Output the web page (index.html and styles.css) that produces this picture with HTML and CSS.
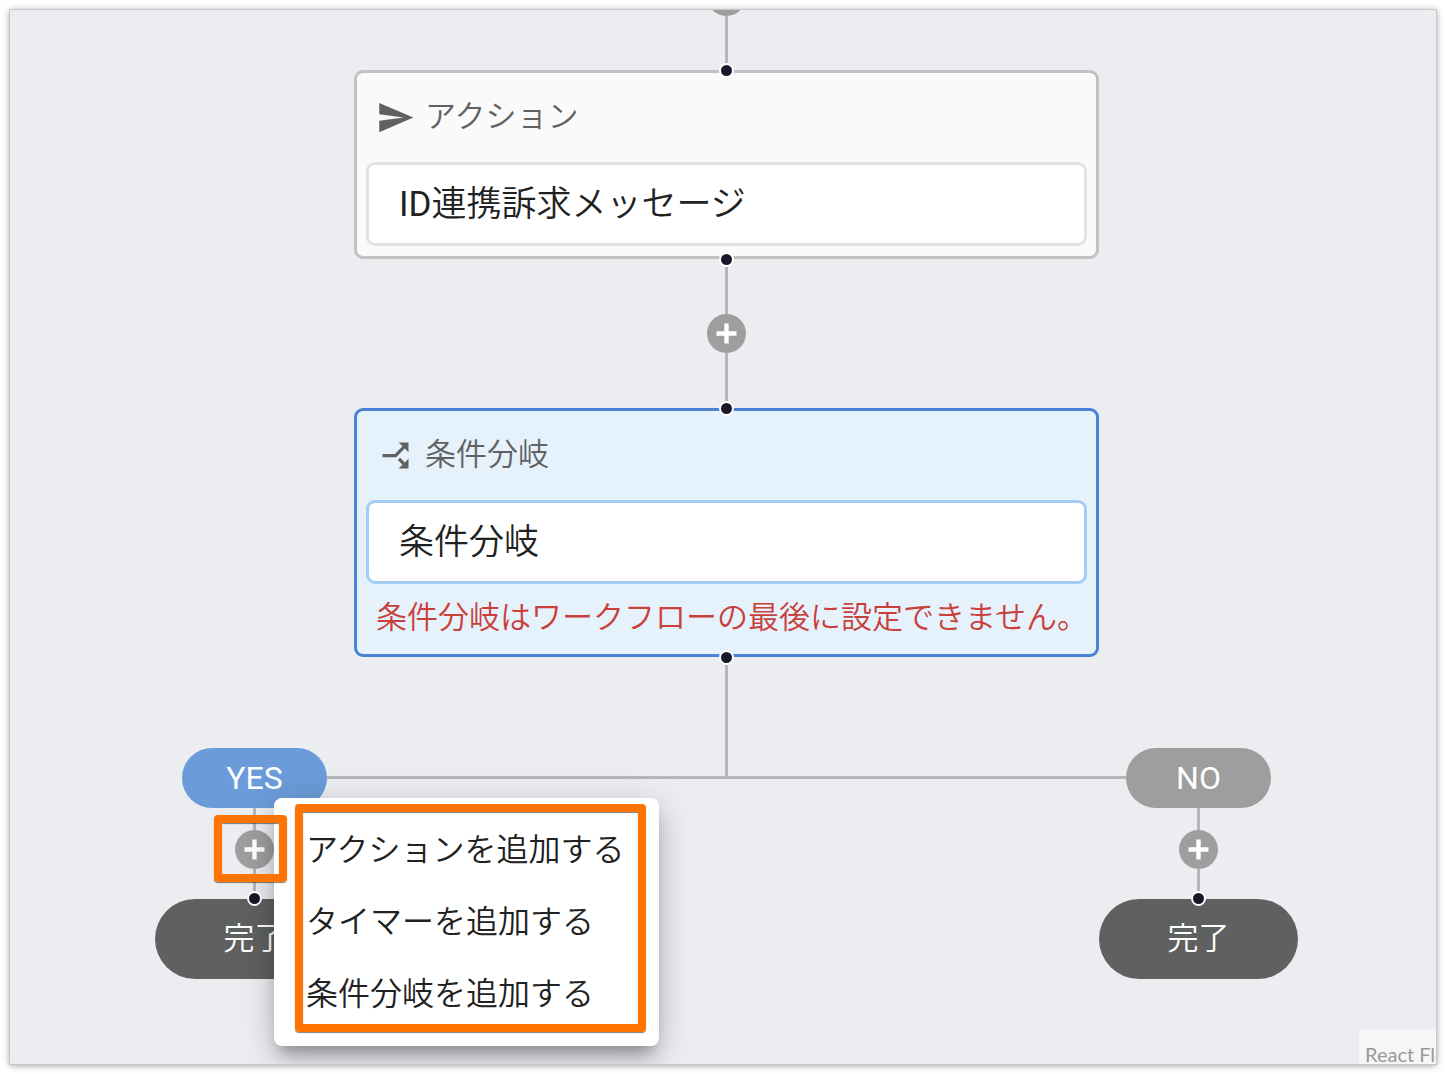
FILE: index.html
```html
<!DOCTYPE html>
<html lang="ja">
<head>
<meta charset="utf-8">
<meta name="viewport" content="width=device-width, initial-scale=1">
<title>ワークフロー</title>
<link rel="stylesheet" href="styles.css">
</head>
<body>
<main class="canvas">
  <div class="flow">
    <button class="add add-first" type="button" aria-label="追加">
      <svg class="plus" viewBox="0 0 21 21"><path d="M8.3 .5h4.4v7.8h7.8v4.4h-7.8v7.8H8.3v-7.8H.5V8.3h7.8z"/></svg>
    </button>
    <span class="line line-entry"></span>

    <section class="node">
      <span class="handle handle-top"></span>
      <label class="node-head" for="action-name">
        <svg class="icon" viewBox="0 0 24 24"><path d="M2.01 21L23 12 2.01 3 2 10l15 2-15 2z"/></svg>
        <span class="node-type">アクション</span>
      </label>
      <input class="node-name" id="action-name" type="text" value="ID連携訴求メッセージ" readonly>
      <span class="handle handle-bottom"></span>
    </section>

    <span class="line line-half"></span>
    <button class="add" type="button" aria-label="追加">
      <svg class="plus" viewBox="0 0 21 21"><path d="M8.3 .5h4.4v7.8h7.8v4.4h-7.8v7.8H8.3v-7.8H.5V8.3h7.8z"/></svg>
    </button>
    <span class="line line-half"></span>

    <section class="node node-selected">
      <span class="handle handle-top"></span>
      <label class="node-head" for="branch-name">
        <svg class="icon" viewBox="0 0 24 24"><path transform="rotate(90 12 12)" d="M14 4l2.29 2.29-2.88 2.88 1.42 1.42 2.88-2.88L20 10V4zm-4 0H4v6l2.29-2.29 4.71 4.7V20h2v-8.41l-5.29-5.3z"/></svg>
        <span class="node-type">条件分岐</span>
      </label>
      <input class="node-name" id="branch-name" type="text" value="条件分岐" readonly>
      <p class="node-error">条件分岐はワークフローの最後に設定できません。</p>
      <span class="handle handle-bottom"></span>
    </section>

    <span class="line line-fork"></span>

    <div class="branches">
      <div class="branch">
        <span class="pill pill-yes">YES</span>
        <span class="line line-short"></span>
        <button class="add" type="button" aria-label="追加" aria-expanded="true">
          <svg class="plus" viewBox="0 0 21 21"><path d="M8.3 .5h4.4v7.8h7.8v4.4h-7.8v7.8H8.3v-7.8H.5V8.3h7.8z"/></svg>
        </button>
        <span class="line line-end"></span>
        <div class="done"><span class="handle handle-done"></span>完了</div>

        <div class="menu">
          <button class="menu-item" type="button">アクションを追加する</button>
          <button class="menu-item" type="button">タイマーを追加する</button>
          <button class="menu-item" type="button">条件分岐を追加する</button>
          <span class="mark mark-menu"></span>
        </div>
        <span class="mark mark-add"></span>
      </div>

      <div class="fork"><span class="line"></span></div>

      <div class="branch">
        <span class="pill">NO</span>
        <span class="line line-short"></span>
        <button class="add" type="button" aria-label="追加">
          <svg class="plus" viewBox="0 0 21 21"><path d="M8.3 .5h4.4v7.8h7.8v4.4h-7.8v7.8H8.3v-7.8H.5V8.3h7.8z"/></svg>
        </button>
        <span class="line line-end"></span>
        <div class="done"><span class="handle handle-done"></span>完了</div>
      </div>
    </div>
  </div>
  <a class="attribution" href="#">React Flow</a>
</main>
</body>
</html>
```
FILE: styles.css
```css
* {
  box-sizing: border-box;
}

body {
  margin: 0;
  padding: 10px;
  background: #fff;
  color: #212121;
  font-family: Roboto, "Noto Sans CJK JP", sans-serif;
  font-weight: 350;
}

button,
input {
  font: inherit;
  color: inherit;
}

.canvas {
  position: relative;
  display: flex;
  justify-content: center;
  min-height: calc(100vh - 20px);
  padding-left: 7px;
  overflow: hidden;
  background: #ecedf1;
  outline: 1px solid #c8c8c8;
  box-shadow: 0 1px 7px rgba(0, 0, 0, 0.45);
}

.flow {
  display: flex;
  flex-direction: column;
  align-items: center;
  width: 1145px;
}

/* connectors */
.line {
  flex: none;
  width: 3px;
  background: #b5b5ba;
}

.line-entry { height: 54px; }
.line-half { height: 55px; }
.line-fork { height: 91px; }
.line-short { height: 22px; }
.line-end { height: 30px; }

.add {
  display: flex;
  flex: none;
  align-items: center;
  justify-content: center;
  width: 39px;
  height: 39px;
  padding: 0;
  border: 0;
  border-radius: 50%;
  background: #9e9e9e;
}

.add-first {
  margin-top: -33px;
}

.plus {
  width: 21px;
  height: 21px;
  fill: #fff;
}

.handle {
  position: absolute;
  right: 0;
  left: 0;
  width: 15px;
  height: 15px;
  margin: 0 auto;
  border: 2px solid #fff;
  border-radius: 50%;
  background: #1a192b;
}

.handle-top { top: -10px; }
.handle-bottom { bottom: -11px; }
.handle-done { top: -8px; }

/* nodes */
.node {
  position: relative;
  display: flex;
  flex-direction: column;
  width: 745px;
  padding: 0 9px 10px;
  border: 3px solid #c2c2c2;
  border-radius: 9px;
  background: #fafafa;
}

.node-head {
  display: flex;
  align-items: center;
  gap: 10px;
  height: 89px;
  padding-left: 10px;
  color: #616161;
  font-size: 31px;
}

.node-type {
  padding-bottom: 8px;
}

.icon {
  width: 39px;
  height: 39px;
  fill: currentColor;
}

.node-name {
  width: 100%;
  height: 84px;
  padding: 0 30px 8px;
  border: 3px solid #e2e2e2;
  border-radius: 9px;
  outline: 0;
  background: #fff;
  font-family: Roboto, "Noto Sans CJK JP DemiLight", "Noto Sans CJK JP", sans-serif;
  font-size: 35px;
  font-weight: 400;
}

.node-error {
  margin: 0;
  padding: 14px 10px 6px;
  color: #c9403a;
  font-size: 31px;
  line-height: 40px;
  white-space: nowrap;
}

.node-selected {
  border-color: #4a82d4;
  background: #e5f1fb;
}

.node-selected .node-name {
  border-color: #a4ccf4;
}

/* branches */
.branches {
  display: flex;
  align-self: stretch;
}

.branch {
  position: relative;
  display: flex;
  flex-direction: column;
  align-items: center;
  width: 201px;
}

.fork {
  display: flex;
  flex: 1;
  justify-content: center;
  height: 31px;
  margin: 0 -28px;
  border-bottom: 3px solid #b5b5ba;
}

.pill {
  width: 145px;
  border-radius: 30px;
  background: #9e9e9e;
  color: #fff;
  font-size: 32px;
  font-weight: 400;
  line-height: 60px;
  text-align: center;
}

.pill-yes {
  background: #6b9cd9;
}

.done {
  position: relative;
  width: 199px;
  border-radius: 40px;
  background: #5f6160;
  color: #fff;
  font-size: 31px;
  line-height: 80px;
  text-align: center;
}

/* menu */
.menu {
  position: absolute;
  z-index: 1;
  top: 50px;
  left: 120px;
  display: flex;
  flex-direction: column;
  width: 385px;
  padding: 16px 0;
  border-radius: 8px;
  background: #fff;
  box-shadow: 0 12px 16px -6px rgba(0, 0, 0, 0.3), 0 14px 30px rgba(0, 0, 0, 0.14), 0 4px 40px rgba(0, 0, 0, 0.1);
}

.menu-item {
  height: 72px;
  padding: 0 32px 6px;
  border: 0;
  background: none;
  font-size: 32px;
  text-align: left;
  white-space: nowrap;
}

/* highlight frames */
.mark {
  position: absolute;
  border: 8px solid #ff7300;
  border-radius: 4px;
  box-shadow: 0 1px 1px rgba(0, 0, 0, 0.5), inset 0 1px 1px rgba(0, 0, 0, 0.5);
  pointer-events: none;
}

.mark-menu {
  top: 6px;
  left: 21px;
  width: 351px;
  height: 228px;
}

.mark-add {
  z-index: 2;
  top: 67px;
  left: 60px;
  width: 73px;
  height: 67px;
}

.attribution {
  position: absolute;
  right: 0;
  bottom: 0;
  width: 77px;
  height: 34px;
  padding: 12px 0 0 6px;
  overflow: hidden;
  background: rgba(255, 255, 255, 0.5);
  color: #999;
  font-family: Lato, sans-serif;
  font-size: 20px;
  font-weight: 400;
  line-height: 24px;
  text-decoration: none;
  white-space: nowrap;
}
```
